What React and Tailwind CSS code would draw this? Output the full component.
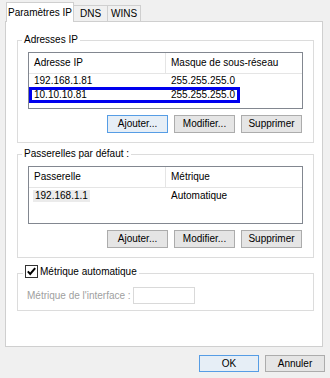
import React from 'react';

function Button({ label, focused, size }) {
  const dims = size === 'dialog' ? 'w-[60px] h-[17px]' : 'w-[61px] h-[18px]';
  return (
    <button
      className={
        'flex items-center justify-center border leading-none ' + dims + ' ' +
        (focused ? 'border-[#569de5] bg-[#e6eef6]' : 'border-[#acacac] bg-[#e5e5e5]')
      }
    >
      {label}
    </button>
  );
}

function ButtonRow() {
  return (
    <div className="mt-[6px] flex justify-end gap-[6px] pr-[1px]">
      <Button label="Ajouter..." />
      <Button label="Modifier..." />
      <Button label="Supprimer" />
    </div>
  );
}

function Header({ first, second }) {
  return (
    <div className="flex h-[21px] border-b border-[#e5e5e5]">
      <div className="flex w-[137px] shrink-0 items-center border-r border-[#e5e5e5] pl-[5px]">{first}</div>
      <div className="flex flex-1 items-center pl-[5px]">{second}</div>
    </div>
  );
}

function CheckBox() {
  return (
    <svg width="13" height="13" viewBox="0 0 13 13" className="inline-block">
      <rect x="0.5" y="0.5" width="12" height="12" fill="#fff" stroke="#333" />
      <path d="M2.8 6.4 L5.2 8.9 L10.2 3.2" fill="none" stroke="#000" strokeWidth="2" />
    </svg>
  );
}

export default function App() {
  return (
    <div className="h-[378px] w-[330px] overflow-hidden bg-[#f0f0f0] px-[5px] pt-[2px] text-[10px] leading-[12px] text-black [font-family:'Liberation_Sans',Arial,sans-serif]">
      {/* tab strip */}
      <div className="flex h-[19px] items-end pl-[1px]">
        <div className="relative z-10 -mb-px flex h-[20px] w-[68px] items-center justify-center border border-b-0 border-[#cfcfcf] bg-white">
          Paramètres IP
        </div>
        <div className="-ml-px flex h-[16px] w-[35px] items-center justify-center border border-b-0 border-[#cfcfcf] bg-[#f0f0f0]">
          DNS
        </div>
        <div className="-ml-px flex h-[16px] w-[34px] items-center justify-center border border-b-0 border-[#cfcfcf] bg-[#f0f0f0]">
          WINS
        </div>
      </div>

      {/* tab page */}
      <div className="h-[326px] w-[318px] border border-[#cfcfcf] bg-white pl-[11px] pr-[8px] pt-[12px]">
        <fieldset className="border border-[#dcdcdc] pb-[9px]">
          <legend className="ml-[4px] px-[2px]">Adresses IP</legend>
          <div className="mx-[10px] mt-[6px]">
            <div className="h-[57px] border border-[#828790] bg-white">
              <Header first="Adresse IP" second="Masque de sous-réseau" />
              <div className="flex h-[13px] items-center">
                <div className="w-[137px] shrink-0 pl-[5px]">192.168.1.81</div>
                <div className="whitespace-nowrap pl-[5px]">255.255.255.0</div>
              </div>
              <div className="flex h-[16px] w-[211px] items-center overflow-hidden border-[3px] border-[#0000ee]">
                <div className="w-[134px] shrink-0 pl-[2px]">10.10.10.81</div>
                <div className="shrink-0 whitespace-nowrap pl-[5px]">255.255.255.0</div>
              </div>
            </div>
            <div className="mt-[6px] flex justify-end gap-[6px] pr-[1px]">
              <Button label="Ajouter..." focused />
              <Button label="Modifier..." />
              <Button label="Supprimer" />
            </div>
          </div>
        </fieldset>

        <fieldset className="mt-[5px] border border-[#dcdcdc] pb-[9px]">
          <legend className="ml-[4px] px-[2px]">Passerelles par défaut :</legend>
          <div className="mx-[10px] mt-[6px]">
            <div className="h-[58px] border border-[#828790] bg-white">
              <Header first="Passerelle" second="Métrique" />
              <div className="mt-[2px] flex h-[12px] items-center">
                <div className="w-[137px] shrink-0 pl-[4px]">
                  <span className="inline-block bg-[#ebebeb] px-[2px]">192.168.1.1</span>
                </div>
                <div className="pl-[5px]">Automatique</div>
              </div>
            </div>
            <ButtonRow />
          </div>
        </fieldset>

        <fieldset className="mt-[7px] border border-[#dcdcdc] pb-[6px]">
          <legend className="ml-[5px] px-[2px]">
            <span className="inline-flex items-center gap-[2px]">
              <CheckBox />
              Métrique automatique
            </span>
          </legend>
          <div className="mt-[6px] flex items-center">
            <div className="ml-[9px] w-[106px] text-[#a0a0a0]">Métrique de l'interface :</div>
            <div className="h-[17px] w-[62px] border border-[#d9d9d9] bg-white"></div>
          </div>
        </fieldset>
      </div>

      {/* dialog buttons */}
      <div className="mt-[8px] flex justify-end gap-[6px]">
        <Button label="OK" focused size="dialog" />
        <Button label="Annuler" size="dialog" />
      </div>
    </div>
  );
}
